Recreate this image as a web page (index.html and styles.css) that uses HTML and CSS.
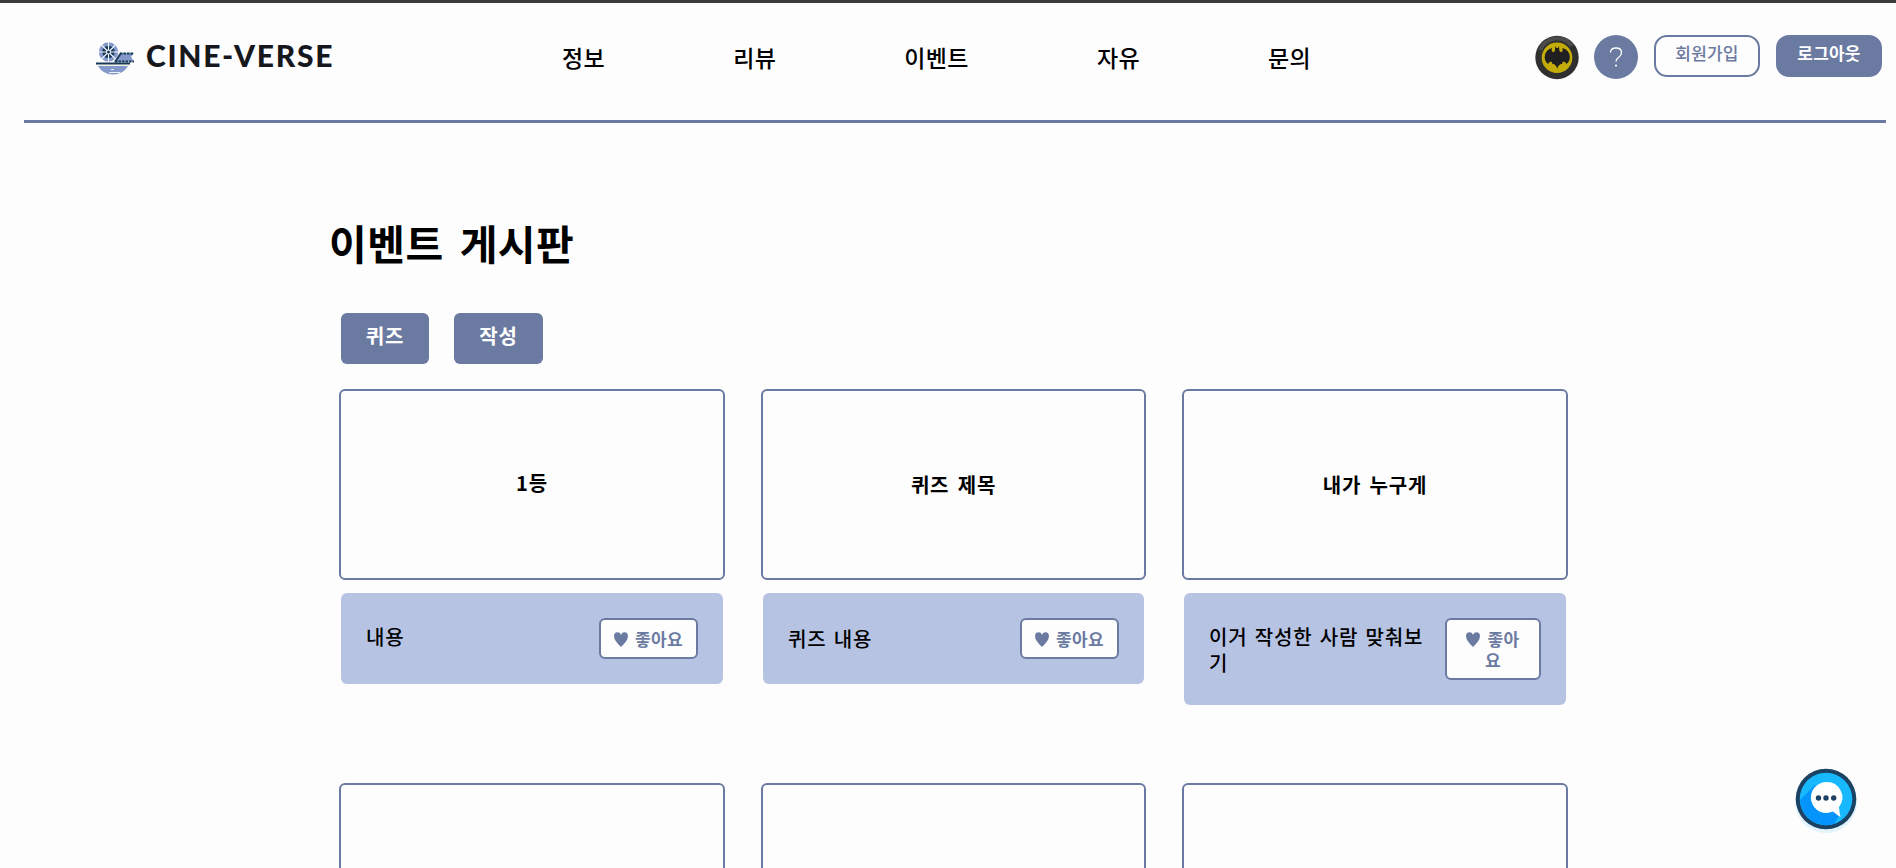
FILE: index.html
```html
<!DOCTYPE html>
<html lang="ko">
<head>
<meta charset="utf-8">
<title>CINE-VERSE</title>
<link rel="stylesheet" href="styles.css">
</head>
<body>
<header class="header">
  <a class="brand">
    <svg class="brand-icon" width="42" height="40" viewBox="0 0 42 40">
      <path d="M3 17A18 18 0 0 1 12 3M25 2Q34 7 36 15" fill="none" stroke="#e9e4e4" stroke-width=".7" stroke-dasharray="1 3"/>
      <circle cx="14.500" cy="16" r="9.700" fill="#8498cc"/>
      <circle cx="14.500" cy="16" r="6.200" fill="#173a57"/>
      <path d="M14.500 6V26M4.500 16H24.500M7.500 9L21.500 23M21.500 9L7.500 23" stroke="#f5f8ff" stroke-width="1.1"/>
      <circle cx="14.500" cy="16" r="2.400" fill="#f5f8ff"/>
      <circle cx="14.500" cy="16" r="1.500" fill="#173a57"/>
      <path d="M21 26L27 17H40L37 21L40 25.500Z" fill="#8498cc"/>
      <path d="M26 17.500H40M21 25.500H40" stroke="#173a57" stroke-width="1.800" stroke-dasharray="2.500 1"/>
      <path d="M21 26L27 17" stroke="#173a57" stroke-width="2"/>
      <path d="M4 30H34Q29 38.500 19 38.500T4 30Z" fill="#8498cc"/>
      <path d="M2 27.500H36" stroke="#173a57" stroke-width="2"/>
      <path d="M3 29.500H35" stroke="#f5f3e4" stroke-width="1"/>
      <path d="M17 33.500H20M15 36.500H26" stroke="#e9f3ff" stroke-width="1"/>
    </svg>
    <span class="brand-name">CINE-VERSE</span>
  </a>
  <nav class="nav"><a>정보</a><a>리뷰</a><a>이벤트</a><a>자유</a><a>문의</a></nav>
  <div class="actions">
    <svg class="avatar" width="44" height="45" viewBox="0 0 44 45">
      <circle cx="22" cy="22.500" r="21.700" fill="#302f2f"/>
      <path d="M5 15A18.500 18.500 0 0 1 37 11" fill="none" stroke="#4c4b4a" stroke-width="4"/>
      <circle cx="22" cy="22.800" r="15.300" fill="#c3ab08"/>
      <path d="M20 15L20.300 11L21.400 13H23L24 11L24.300 15Q24.500 17.500 26.500 17Q28.300 16 27.500 13Q34.500 15 34.800 22Q35 26 31.500 29Q30.500 26.500 28.500 26.500Q27.500 26.500 27 29Q24 28.500 22.200 33.500Q20.500 28.500 17.500 29Q17 26.500 16 26.500Q14 26.500 13 29Q9.500 26 9.700 22Q10 15 17 13Q16 16 17.800 17Q20 17.500 20 15Z" fill="#1e1f1e"/>
    </svg>
    <a class="help"><svg width="16" height="22" viewBox="0 0 16 22"><path d="M2.500 6.500Q2.500 2 8 2T13.500 6.500Q13.500 9 11 11Q8 13 8 15.500" fill="none" stroke="#fff" stroke-width="1.300"/><circle cx="8" cy="19.500" r="1.100" fill="#fff"/></svg></a>
    <a class="pill">회원가입</a>
    <a class="pill pill-solid">로그아웃</a>
  </div>
</header>
<main class="board">
  <h1 class="title">이벤트 게시판</h1>
  <div class="tools"><a class="tool">퀴즈</a><a class="tool">작성</a></div>
  <div class="grid">
    <article><h2 class="card card-high">1등</h2><div class="panel"><p class="text text-high">내용</p><button class="like"><svg class="heart" viewBox="0 0 13 14"><path d="M6.500 14Q0 8 0 4Q0 .3 3.300 .3Q5.500 .3 6.500 2.500Q7.500 .3 9.700 .3Q13 .3 13 4Q13 8 6.500 14Z"/></svg> 좋아요</button></div></article>
    <article><h2 class="card">퀴즈 제목</h2><div class="panel"><p class="text">퀴즈 내용</p><button class="like"><svg class="heart" viewBox="0 0 13 14"><path d="M6.500 14Q0 8 0 4Q0 .3 3.300 .3Q5.500 .3 6.500 2.500Q7.500 .3 9.700 .3Q13 .3 13 4Q13 8 6.500 14Z"/></svg> 좋아요</button></div></article>
    <article><h2 class="card">내가 누구게</h2><div class="panel"><p class="text text-long">이거 작성한 사람 맞춰보기</p><button class="like like-narrow"><svg class="heart" viewBox="0 0 13 14"><path d="M6.500 14Q0 8 0 4Q0 .3 3.300 .3Q5.500 .3 6.500 2.500Q7.500 .3 9.700 .3Q13 .3 13 4Q13 8 6.500 14Z"/></svg> 좋아<br>요</button></div></article>
    <article><h2 class="card"></h2></article>
    <article><h2 class="card"></h2></article>
    <article><h2 class="card card-next">시계</h2></article>
  </div>
</main>
<a class="chat">
  <svg width="70" height="72" viewBox="0 0 70 72">
    <circle cx="35" cy="37" r="31" fill="#e2f3fb"/>
    <circle cx="35" cy="34" r="30.300" fill="#1b4263"/>
    <circle cx="35" cy="34" r="26.300" fill="#18b8ff"/>
    <path d="M9 35L24 20L48 51L43 59A26.300 26.300 0 0 1 9 35Z" fill="#0494fb"/>
    <path d="M35 17A15.500 15.500 0 1 0 42 46.500Q46 50 49.500 52Q48.500 48 48 42A15.500 15.500 0 0 0 35 17Z" fill="#fff"/>
    <circle cx="27.500" cy="33" r="2.700" fill="#1b4263"/><circle cx="35" cy="33" r="2.700" fill="#1b4263"/><circle cx="42.700" cy="33" r="2.700" fill="#1b4263"/>
  </svg>
</a>
</body>
</html>
```
FILE: styles.css
```css
* { box-sizing: border-box; }
body {
  margin: 0;
  height: 868px;
  overflow: hidden;
  border-top: 3px solid #3c3b3c;
  background: #fdfdfd;
  color: #000;
  font-family: "Noto Sans CJK KR", sans-serif;
}
.header {
  display: flex;
  align-items: flex-start;
  height: 120px;
  margin: 0 10px 0 24px;
  border-bottom: 3px solid #6b7aa1;
}
.brand { display: flex; width: 538px; padding: 33px 0 0 70px; }
.brand-icon { flex: none; }
.brand-name {
  margin-left: 10px;
  font: 900 30px/38px Lato, sans-serif;
  letter-spacing: 1.7px;
  color: #16181d;
}
.nav {
  display: flex;
  gap: 128px;
  padding-top: 37px;
  font-size: 23px;
  font-weight: 500;
  line-height: 34px;
  letter-spacing: .4px;
}
.actions {
  display: flex;
  align-items: flex-start;
  gap: 16px;
  margin: 32px 4px 0 auto;
}
.avatar { margin-right: -1px; }
.help {
  display: flex;
  align-items: center;
  justify-content: center;
  width: 44px;
  height: 44px;
  border-radius: 50%;
  background: #6b7aa1;
}
.pill {
  width: 106px;
  height: 42px;
  border: 2px solid #6b7aa1;
  border-radius: 13px;
  background: #fdfdfd;
  color: #6b7aa1;
  font-size: 17px;
  font-weight: 500;
  line-height: 32px;
  letter-spacing: .2px;
  text-align: center;
}
.pill-solid { background: #6b7aa1; color: #fff; font-weight: 700; }
.board { width: 1260px; height: 745px; padding-left: 11px; margin-left: 318px; overflow: hidden; }
.title {
  margin: 0;
  padding-top: 89px;
  font-size: 41px;
  line-height: 60px;
  letter-spacing: .5px;
  word-spacing: 4px;
}
.tools { display: flex; gap: 25px; padding: 41px 0 25px 12px; }
.tool {
  width: 88px;
  height: 51px;
  border-radius: 6px;
  background: #6b7aa1;
  color: #fff;
  font-size: 20px;
  font-weight: 700;
  line-height: 45px;
  letter-spacing: .8px;
  text-align: center;
}
.tool:last-child { width: 89px; }
.grid {
  display: grid;
  grid-template-columns: 386px 385px 386px;
  grid-template-rows: 394px 85px;
  column-gap: 36px;
  margin-left: 10px;
  width: 1229px;
}
.card {
  height: 191px;
  margin: 0;
  border: 2px solid #6b7aa1;
  border-radius: 6px;
  font-size: 20px;
  line-height: 187px;
  letter-spacing: .8px;
  word-spacing: 2px;
  text-align: center;
}
.card-high { line-height: 183px; }
.card-next { line-height: 185px; }
.panel {
  display: flex;
  justify-content: space-between;
  align-items: flex-start;
  margin: 13px 2px 0;
  padding: 25px;
  border-radius: 6px;
  background: #b7c3e3;
}
.text {
  margin: 8px 0 0;
  font-size: 20px;
  font-weight: 500;
  line-height: 26px;
  letter-spacing: .8px;
  word-spacing: 1px;
}
.text-high { margin-top: 6px; }
.text-long { width: 220px; margin-top: 6px; word-break: break-all; }
.like {
  width: 99px;
  height: 41px;
  padding: 0 0 1px;
  border: 2px solid #6b7aa1;
  border-radius: 6px;
  background: #fdfdfd;
  color: #6b7aa1;
  font: 700 17px/21px "Noto Sans CJK KR", sans-serif;
  letter-spacing: .4px;
  white-space: nowrap;
}
.like-narrow { width: 96px; height: 62px; }
.heart { width: 14px; height: 15px; margin-right: 2px; vertical-align: -1px; fill: #6b7aa1; }
.chat { position: fixed; left: 1791px; top: 765px; }
```
